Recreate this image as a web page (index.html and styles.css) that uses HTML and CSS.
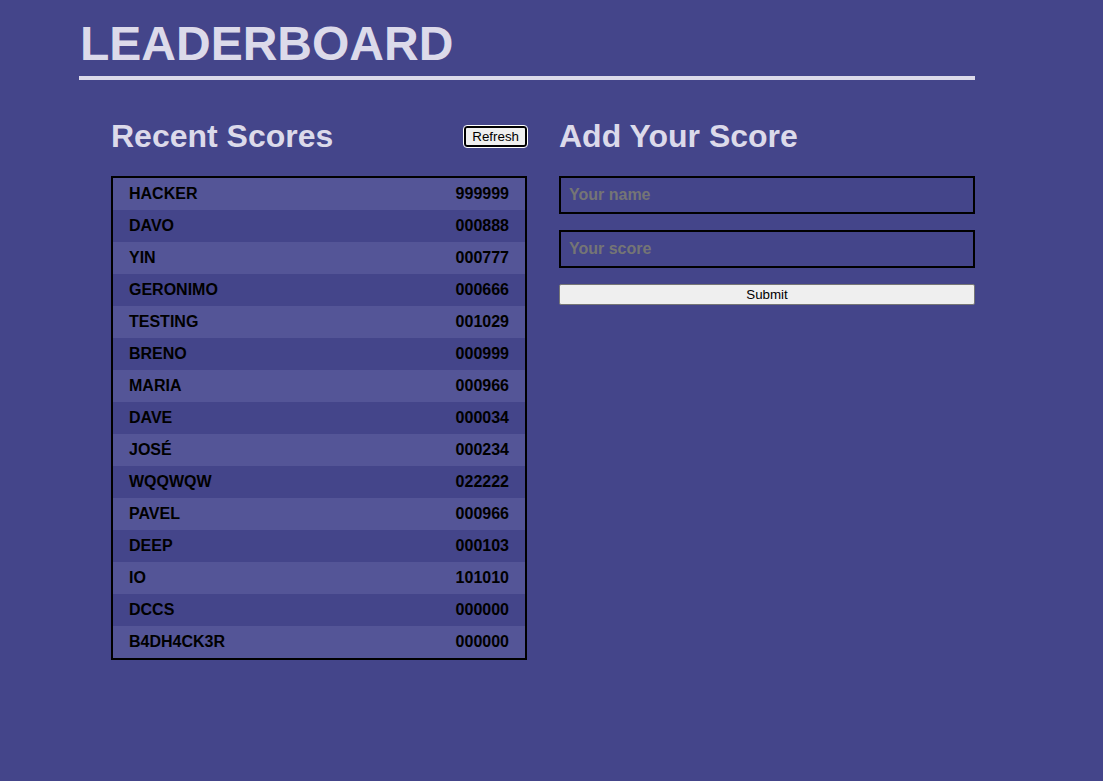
FILE: index.html
```html
<!DOCTYPE html>
<html>
<head>
<meta charset="utf-8">
<link rel="stylesheet" href="styles.css">
</head>
<body>
<div class="page">
  <h1 class="title">LEADERBOARD</h1>
  <div class="columns">
    <section class="col">
      <div class="col-head">
        <h2>Recent Scores</h2>
        <button class="refresh">Refresh</button>
      </div>
      <ul class="scores">
        <li><span>HACKER</span><span>999999</span></li>
        <li><span>DAVO</span><span>000888</span></li>
        <li><span>YIN</span><span>000777</span></li>
        <li><span>GERONIMO</span><span>000666</span></li>
        <li><span>TESTING</span><span>001029</span></li>
        <li><span>BRENO</span><span>000999</span></li>
        <li><span>MARIA</span><span>000966</span></li>
        <li><span>DAVE</span><span>000034</span></li>
        <li><span>JOSÉ</span><span>000234</span></li>
        <li><span>WQQWQW</span><span>022222</span></li>
        <li><span>PAVEL</span><span>000966</span></li>
        <li><span>DEEP</span><span>000103</span></li>
        <li><span>IO</span><span>101010</span></li>
        <li><span>DCCS</span><span>000000</span></li>
        <li><span>B4DH4CK3R</span><span>000000</span></li>
      </ul>
    </section>
    <section class="col">
      <div class="col-head">
        <h2>Add Your Score</h2>
      </div>
      <form class="form">
        <input type="text" placeholder="Your name">
        <input type="text" placeholder="Your score">
        <button type="button" class="submit">Submit</button>
      </form>
    </section>
  </div>
</div>
</body>
</html>
```
FILE: styles.css
```css
html, body {
  margin: 0;
  padding: 0;
  background: #44458a;
  font-family: "Liberation Sans", Arial, sans-serif;
  color: #dcdaea;
}
.page {
  width: 896px;
  margin-left: 79px;
  padding-top: 16px;
}
.title {
  margin: 0;
  font-size: 48px;
  line-height: 55px;
  font-weight: bold;
  padding-left: 1px;
  padding-bottom: 5px;
  border-bottom: 4px solid #dcdaea;
  color: #dcdaea;
}
.columns {
  display: grid;
  grid-template-columns: 416px 416px;
  column-gap: 32px;
  padding-left: 32px;
  margin-top: 38px;
}
.col-head {
  display: flex;
  align-items: center;
  justify-content: space-between;
  height: 37px;
  margin-bottom: 21px;
}
.col-head h2 {
  margin: 0;
  font-size: 32px;
  line-height: 37px;
  font-weight: bold;
  color: #dcdaea;
}
.refresh {
  font-family: "Liberation Sans", Arial, sans-serif;
  font-size: 13.33px;
  background: #efefef;
  color: #000;
  border: 2px solid #000;
  border-radius: 3px;
  outline: 1px solid #fff;
  padding: 1px 6px;
  height: 21px;
  margin: 0;
}
.scores {
  list-style: none;
  margin: 0;
  padding: 0;
  border: 2px solid #000;
}
.scores li {
  display: flex;
  justify-content: space-between;
  height: 32px;
  line-height: 32px;
  padding: 0 16px 0 16px;
  font-size: 16px;
  font-weight: bold;
  color: #000;
  background: #44458a;
}
.scores li:nth-child(odd) {
  background: #545597;
}
.form {
  display: flex;
  flex-direction: column;
  gap: 16px;
}
.form input {
  box-sizing: border-box;
  width: 100%;
  height: 38px;
  border: 2px solid #000;
  background: transparent;
  padding: 0 8px;
  font-family: "Liberation Sans", Arial, sans-serif;
  font-size: 16px;
  font-weight: bold;
  color: #000;
  margin: 0;
}
.form input::placeholder {
  color: #757575;
}
.submit {
  width: 100%;
  height: 21px;
  font-family: "Liberation Sans", Arial, sans-serif;
  font-size: 13.33px;
  background: #efefef;
  color: #000;
  border: 1px solid #767676;
  border-radius: 2px;
  padding: 1px 6px;
}
```
